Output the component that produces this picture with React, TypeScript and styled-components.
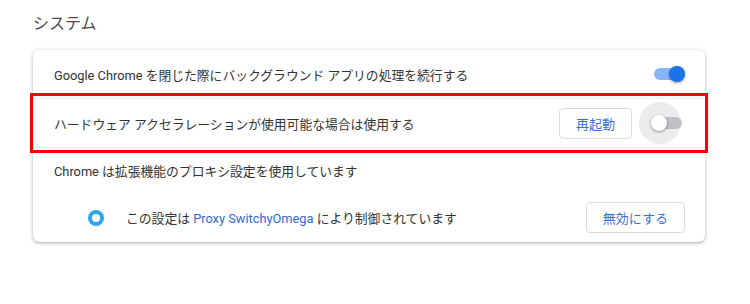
import React from 'react';
import styled, { createGlobalStyle } from 'styled-components';

/**
 * Global
 */
const GlobalStyle = createGlobalStyle`
    html, body {
        margin: 0;
        padding: 0;
        background: #ffffff;
    }
    body {
        font-family: Roboto, "Noto Sans CJK JP", sans-serif;
        color: #333333;
    }
`;

/**
 * Styled Components
 */
const Page = styled.div`
    width: 750px;
    height: 304px;
    padding: 0 45px 0 33px;
    box-sizing: border-box;
`;

const SectionTitle = styled.h2`
    margin: 0;
    height: 50px;
    padding-top: 13px;
    box-sizing: border-box;
    font-size: 16px;
    font-weight: 400;
    line-height: 22px;
    color: #4a4a4a;
`;

const Card = styled.div`
    background: #ffffff;
    border-radius: 6px;
    box-shadow: 0 1px 2px rgba(60, 64, 67, 0.3), 0 1px 4px 1px rgba(60, 64, 67, 0.15);
`;

const Row = styled.div<{ $divider?: boolean; $height: number; $indent?: number; $highlight?: boolean }>`
    position: relative;
    display: flex;
    align-items: center;
    box-sizing: border-box;
    height: ${(p) => p.$height}px;
    padding: 0 20px 0 ${(p) => 21 + (p.$indent || 0)}px;
    border-top: ${(p) => (p.$divider ? '1px solid #ebebeb' : 'none')};
    font-size: 12.8px;
    color: #333333;

    ${(p) => p.$highlight && `
        &::after {
            content: '';
            position: absolute;
            top: -6px;
            bottom: -6px;
            left: -3px;
            right: -3px;
            border: 3px solid #ff0000;
            pointer-events: none;
        }
    `}
`;

const Label = styled.div`
    flex: 1;
    white-space: nowrap;
`;

const Link = styled.span`
    color: #3367d6;
`;

const Button = styled.button`
    height: 31px;
    padding: 0 16px;
    border: 1px solid #dadce0;
    border-radius: 4px;
    background: #ffffff;
    color: #3a6fd8;
    font-family: Roboto, "Noto Sans CJK JP", sans-serif;
    font-size: 13px;
`;

const ToggleBox = styled.div<{ $on: boolean }>`
    position: relative;
    width: 34px;
    height: 16px;
    margin-left: ${(p) => (p.$on ? 0 : 19)}px;
`;

const Track = styled.div<{ $on: boolean }>`
    position: absolute;
    left: 3px;
    right: 3px;
    top: 2px;
    height: 12px;
    border-radius: 6px;
    background: ${(p) => (p.$on ? '#8ab4f8' : '#bdc1c6')};
`;

const Halo = styled.div`
    position: absolute;
    left: -12px;
    top: -13px;
    width: 42px;
    height: 42px;
    border-radius: 50%;
    background: #ececec;
`;

const Knob = styled.div<{ $on: boolean }>`
    position: absolute;
    top: 0;
    left: ${(p) => (p.$on ? 18 : 0)}px;
    width: 16px;
    height: 16px;
    border-radius: 50%;
    background: ${(p) => (p.$on ? '#1a73e8' : '#ffffff')};
    box-shadow: 0 1px 3px rgba(0, 0, 0, 0.4);
`;

const ExtIcon = styled.div`
    width: 8px;
    height: 8px;
    border: 4px solid #2ea6ef;
    border-radius: 50%;
    margin-right: 22px;
    flex-shrink: 0;
`;

/**
 * Parts
 */
const Toggle = ({ on, focused }: { on: boolean; focused?: boolean }) => (
    <ToggleBox $on={on}>
        {focused && <Halo />}
        <Track $on={on} />
        <Knob $on={on} />
    </ToggleBox>
);

/**
 * Main Component
 */
const App = () => (
    <>
        <GlobalStyle />
        <Page>
            <SectionTitle>システム</SectionTitle>
            <Card>
                <Row $height={48}>
                    <Label>Google Chrome を閉じた際にバックグラウンド アプリの処理を続行する</Label>
                    <Toggle on />
                </Row>
                <Row $height={49} $divider $highlight>
                    <Label>ハードウェア アクセラレーションが使用可能な場合は使用する</Label>
                    <Button>再起動</Button>
                    <Toggle on={false} focused />
                </Row>
                <Row $height={46} $divider>
                    <Label>Chrome は拡張機能のプロキシ設定を使用しています</Label>
                </Row>
                <Row $height={49} $indent={34}>
                    <ExtIcon />
                    <Label>
                        この設定は <Link>Proxy SwitchyOmega</Link> により制御されています
                    </Label>
                    <Button>無効にする</Button>
                </Row>
            </Card>
        </Page>
    </>
);

export default App;
